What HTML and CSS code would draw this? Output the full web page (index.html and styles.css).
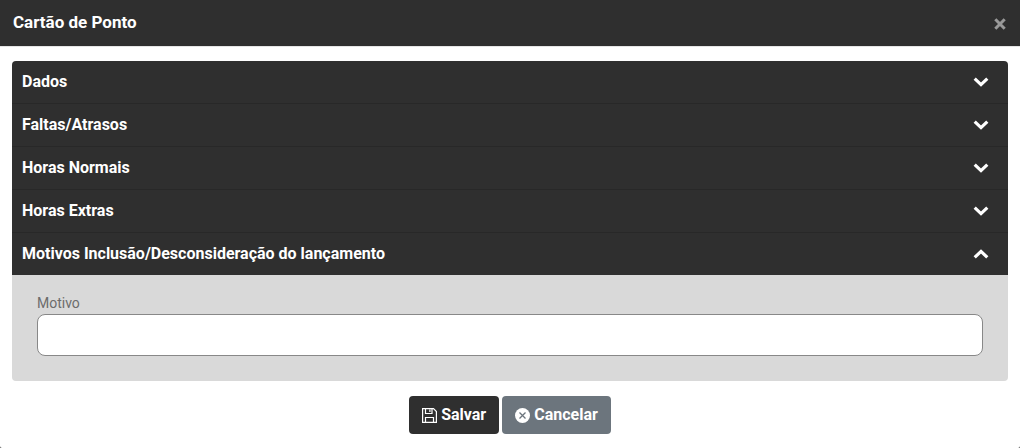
FILE: index.html
```html
<!DOCTYPE html>
<html lang="pt-BR">
<head>
    <meta charset="UTF-8">
    <meta name="viewport" content="width=device-width, initial-scale=1.0">
    <title>Cartão de Ponto</title>
    <link rel="stylesheet" href="styles.css">
</head>
<body>

<div class="modal">
    <div class="modal-header">
        <h5>Cartão de Ponto</h5>
        <button type="button" class="close" aria-label="Fechar">
            <svg width="12" height="12" viewBox="0 0 12 12"><path d="M1.3 1.3l9.4 9.4M10.7 1.3l-9.4 9.4"/></svg>
        </button>
    </div>

    <form class="modal-body" action="#" method="post">
        <div class="accordion">
            <div class="card-header">
                <span>Dados</span>
                <svg class="arrow" width="16" height="10" viewBox="0 0 16 10"><path d="M1.7 1.6l6.3 6 6.3-6"/></svg>
            </div>
            <div class="card-header">
                <span>Faltas/Atrasos</span>
                <svg class="arrow" width="16" height="10" viewBox="0 0 16 10"><path d="M1.7 1.6l6.3 6 6.3-6"/></svg>
            </div>
            <div class="card-header">
                <span>Horas Normais</span>
                <svg class="arrow" width="16" height="10" viewBox="0 0 16 10"><path d="M1.7 1.6l6.3 6 6.3-6"/></svg>
            </div>
            <div class="card-header">
                <span>Horas Extras</span>
                <svg class="arrow" width="16" height="10" viewBox="0 0 16 10"><path d="M1.7 1.6l6.3 6 6.3-6"/></svg>
            </div>
            <div class="card-header open">
                <span>Motivos Inclusão/Desconsideração do lançamento</span>
                <svg class="arrow" width="16" height="10" viewBox="0 0 16 10"><path d="M1.7 8.4l6.3-6 6.3 6"/></svg>
            </div>
            <div class="card-body">
                <label for="motivo">Motivo</label>
                <input type="text" id="motivo" name="motivo">
            </div>
        </div>

        <div class="buttons">
            <button type="submit" class="btn btn-save">
                <svg width="15" height="15" viewBox="0 0 15 15"><path d="M.6.6h10.9l2.9 2.9v10.9H.6zM3.5.6v4.9h6.5V.6M7.9 1.5v2.6M3.5 14.4V9.5h8v4.9"/></svg>
                Salvar
            </button>
            <button type="button" class="btn btn-cancel">
                <svg width="15" height="15" viewBox="0 0 15 15"><circle cx="7.5" cy="7.5" r="7.5"/><path d="M4.5 4.5l6 6M10.5 4.5l-6 6"/></svg>
                Cancelar
            </button>
        </div>
    </form>
</div>

</body>
</html>
```
FILE: styles.css
```css
* {
    box-sizing: border-box;
}

body {
    margin: 0;
    font-family: Roboto, sans-serif;
    font-size: 16px;
    background-color: #444444;
    overflow: hidden;
}

.modal {
    height: 448px;
    background-color: #ffffff;
    border-radius: 0 0 2px 2px;
}

.modal-header {
    display: flex;
    justify-content: space-between;
    align-items: center;
    height: 47px;
    padding: 0 14px 1px 13px;
    background-color: #2f2f2f;
    border-bottom: 1px solid #e5e5e5;
    color: #ffffff;
}

.modal-header h5 {
    margin: 0;
    font-size: 17px;
    line-height: 25px;
    font-weight: bold;
}

.close {
    display: flex;
    margin-top: 3px;
    padding: 0;
    border: none;
    background: none;
}

.close svg {
    fill: none;
    stroke: #999999;
    stroke-width: 3;
}

.modal-body {
    padding: 14px 12px 0;
}

.accordion {
    border-radius: 4px;
    overflow: hidden;
}

.card-header {
    display: flex;
    justify-content: space-between;
    align-items: center;
    height: 43px;
    padding: 0 19px 1px 10px;
    background-color: #2f2f2f;
    border-bottom: 1px solid #282828;
    color: #ffffff;
    font-weight: bold;
}

.card-header.open {
    height: 42px;
    border-bottom: none;
}

.arrow {
    fill: none;
    stroke: #ffffff;
    stroke-width: 3.2;
}

.card-body {
    height: 106px;
    padding: 20px 25px 25px;
    background-color: #d9d9d9;
}

label {
    display: block;
    color: #6c6c6c;
    font-size: 14px;
    line-height: 16px;
    margin-bottom: 3px;
}

input[type="text"] {
    display: block;
    width: 100%;
    height: 42px;
    padding: 6px 12px;
    border: 1px solid #888888;
    border-radius: 8px;
    background-color: #ffffff;
}

.buttons {
    display: flex;
    justify-content: center;
    gap: 3px;
    margin-top: 15px;
}

.btn {
    display: flex;
    align-items: center;
    gap: 4px;
    height: 38px;
    padding: 0 13px 2px;
    border: none;
    border-radius: 4px;
    color: #ffffff;
    font-family: inherit;
    font-size: 16px;
    font-weight: bold;
    cursor: pointer;
}

.btn svg {
    margin-top: 3px;
}

.btn-save {
    background-color: #2f2f2f;
}

.btn-save svg {
    fill: none;
    stroke: #ffffff;
    stroke-width: 1.2;
}

.btn-cancel {
    background-color: #6c757d;
}

.btn-cancel circle {
    fill: #ffffff;
}

.btn-cancel path {
    stroke: #6c757d;
    stroke-width: 1.3;
}
```
